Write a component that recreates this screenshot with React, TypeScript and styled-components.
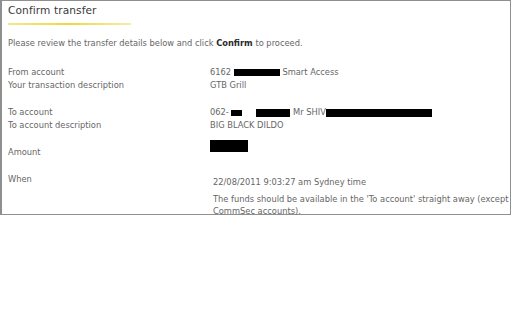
import React from 'react'
import styled, { createGlobalStyle } from 'styled-components'

const GlobalStyle = createGlobalStyle`
  html, body {
    margin: 0;
    padding: 0;
    background: #fff;
  }
  body {
    font-family: 'DejaVu Sans', Verdana, sans-serif;
  }
`

const Panel = styled.div`
  box-sizing: border-box;
  width: 511px;
  height: 215px;
  border: 1px solid #8f8f8f;
  border-left: 2px solid #8f8f8f;
  padding: 0 6px;
`

const Title = styled.h1`
  margin: 0;
  padding-top: 1px;
  font-size: 10.6px;
  font-weight: normal;
  line-height: 16px;
  color: #3a3a3a;
  letter-spacing: 0.1px;
`

const Rule = styled.div`
  width: 123px;
  height: 2px;
  margin-top: 5px;
  background: linear-gradient(to right, #f3e68a, #f0d840 50%, #f6eca8);
`

const Intro = styled.p`
  margin: 12px 0 0;
  font-size: 8.3px;
  line-height: 13px;
  color: #666;

  strong {
    color: #2a2a2a;
  }
`

const Details = styled.div`
  margin-top: 16px;
  display: grid;
  grid-template-columns: 202px 1fr;
  font-size: 8.3px;
  line-height: 13px;
  color: #666;
`

const Label = styled.div<{ $gap?: boolean }>`
  margin-top: ${(p) => (p.$gap ? '14px' : '0')};
`

const Value = styled.div<{ $gap?: boolean; $inset?: boolean }>`
  margin-top: ${(p) => (p.$gap ? '14px' : '0')};
  padding-left: ${(p) => (p.$inset ? '3px' : '0')};
  padding-top: ${(p) => (p.$inset ? '3px' : '0')};
  white-space: nowrap;
`

const Note = styled.div`
  margin-top: 4px;
  line-height: 12px;
  white-space: normal;
  width: 310px;
`

const Redact = styled.span<{ $w: number; $h?: number; $ml?: number }>`
  display: inline-block;
  vertical-align: middle;
  width: ${(p) => p.$w}px;
  height: ${(p) => p.$h ?? 7}px;
  margin-left: ${(p) => p.$ml ?? 0}px;
  background: #000;
`

const AmountBox = styled.div`
  width: 38px;
  height: 12px;
  margin-top: -6px;
  background: #000;
`

export default function App() {
  return (
    <>
      <GlobalStyle />
      <Panel>
        <Title>Confirm transfer</Title>
        <Rule />
        <Intro>
          Please review the transfer details below and click <strong>Confirm</strong> to proceed.
        </Intro>
        <Details>
          <Label>From account</Label>
          <Value>
            6162 <Redact $w={46} /> Smart Access
          </Value>
          <Label>Your transaction description</Label>
          <Value>GTB Grill</Value>

          <Label $gap>To account</Label>
          <Value $gap>
            062-<Redact $w={11} $h={6} $ml={2} /> <Redact $w={34} $h={8} $ml={12} /> Mr SHIV<Redact $w={106} $h={8} />
          </Value>
          <Label>To account description</Label>
          <Value>BIG BLACK DILDO</Value>

          <Label $gap>Amount</Label>
          <Value $gap>
            <AmountBox />
          </Value>

          <Label $gap>When</Label>
          <Value $gap $inset>
            22/08/2011 9:03:27 am Sydney time
            <Note>
              The funds should be available in the 'To account' straight away (except CommSec accounts).
            </Note>
          </Value>
        </Details>
      </Panel>
    </>
  )
}
